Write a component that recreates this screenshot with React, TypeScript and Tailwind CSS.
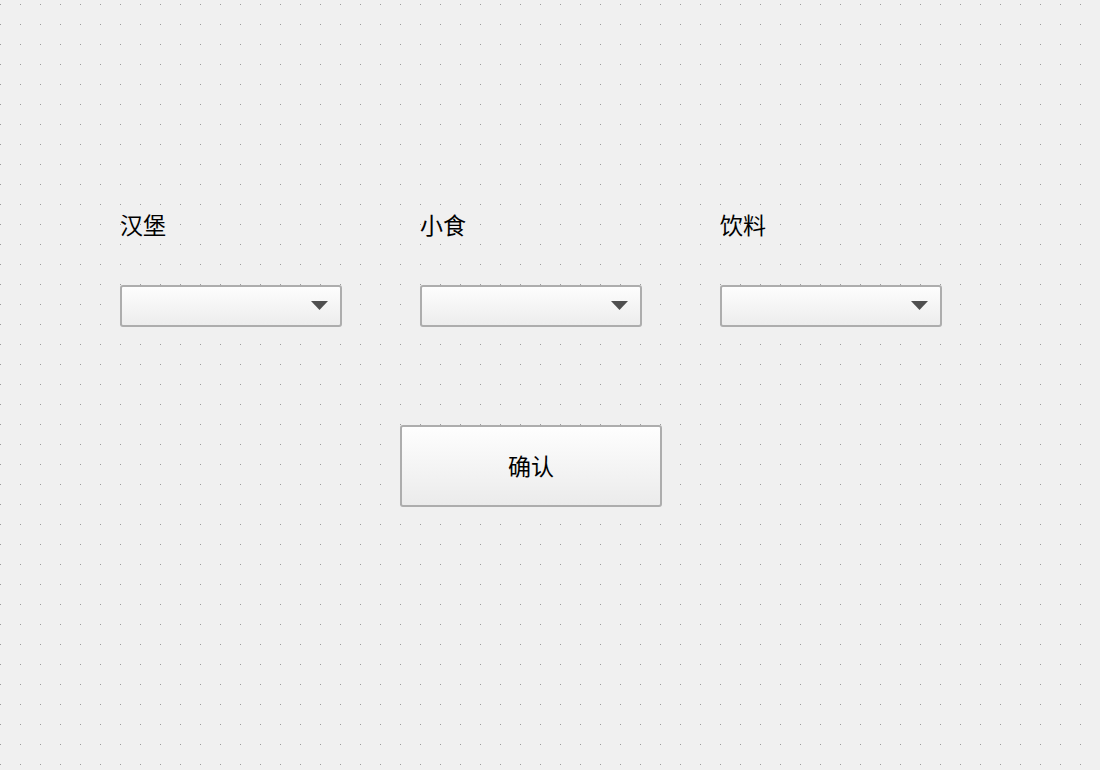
import React from "react";

const categories = ["汉堡", "小食", "饮料"];

// designer-style dot grid behind the form
const DotGrid = () => (
  <svg className="absolute inset-0 h-full w-full">
    <defs>
      <pattern id="dots" width="20" height="20" patternUnits="userSpaceOnUse">
        <rect x="0" y="4" width="1" height="1" fill="#9c9c9c" />
      </pattern>
    </defs>
    <rect width="100%" height="100%" fill="url(#dots)" />
  </svg>
);

const Combo = () => (
  <div className="mt-[49px] flex h-[42px] w-[222px] items-center justify-end rounded-[3px] border-2 border-[#adadad] bg-gradient-to-b from-[#fdfdfd] to-[#ededed] pr-[12px]">
    <svg width="17" height="9" viewBox="0 0 17 9" className="mb-[1px]">
      <polygon points="0,0 17,0 8.5,9" fill="#4f4f4f" />
    </svg>
  </div>
);

export default function App() {
  return (
    <div className="relative min-h-[770px] w-full bg-[#f0f0f0] font-['Noto_Sans_CJK_SC','Noto_Sans',sans-serif] text-black">
      <DotGrid />
      <div className="relative pl-[120px] pt-[212px]">
        <div className="flex">
          {categories.map((label) => (
            <div key={label} className="w-[300px]">
              <div className="h-[24px] text-[23px] leading-[24px]">{label}</div>
              <Combo />
            </div>
          ))}
        </div>
        <button className="ml-[280px] mt-[98px] flex h-[82px] w-[262px] items-center justify-center rounded-[3px] border-2 border-[#adadad] bg-gradient-to-b from-[#fefefe] to-[#ebebeb] pb-[3px] text-[23px] leading-[24px] text-black">
          确认
        </button>
      </div>
    </div>
  );
}
